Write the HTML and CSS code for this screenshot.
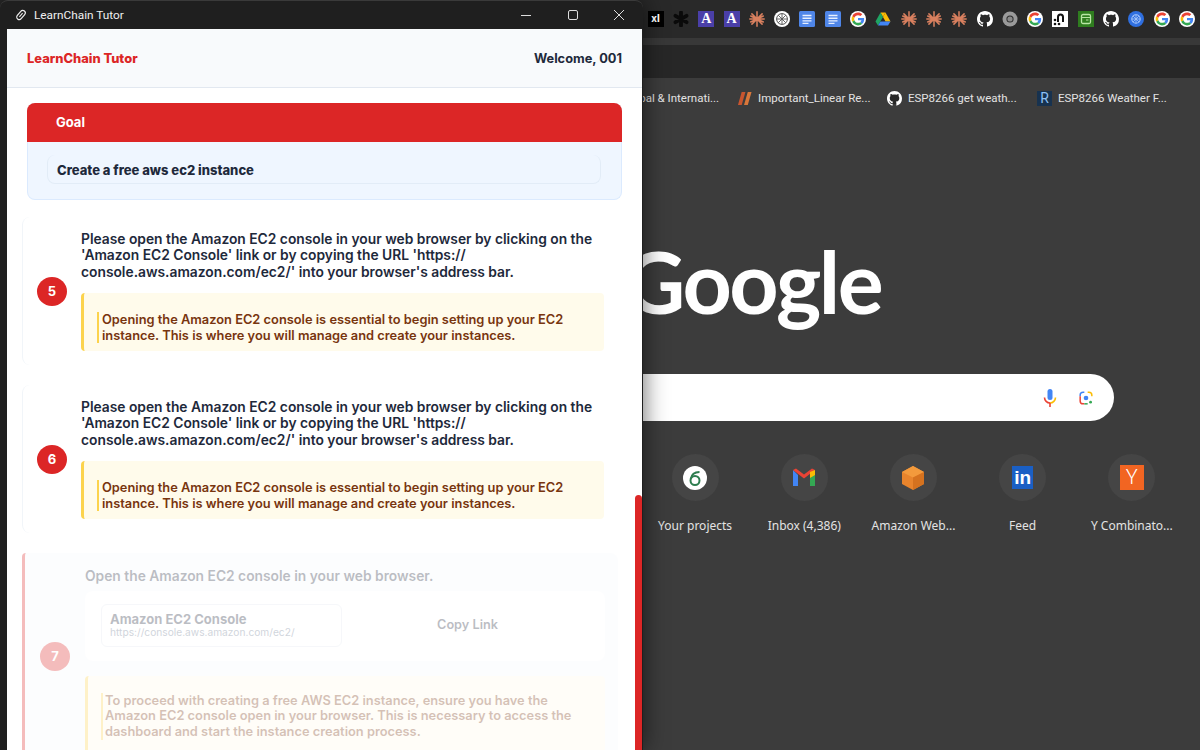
FILE: index.html
```html
<!DOCTYPE html>
<html lang="en">
<head>
  <meta charset="UTF-8" />
  <title>LearnChain Tutor</title>
  <link rel="stylesheet" href="styles.css">
</head>
<body>
<svg class="defs" width="0" height="0">
  <symbol id="i-google" viewBox="-6 -6 60 60">
    <circle cx="24" cy="24" r="30" fill="#fff"/>
    <path fill="#EA4335" d="M24 9.5c3.54 0 6.71 1.22 9.21 3.6l6.85-6.85C35.9 2.38 30.47 0 24 0 14.62 0 6.51 5.38 2.56 13.22l7.98 6.19C12.43 13.72 17.74 9.5 24 9.5z"/>
    <path fill="#4285F4" d="M46.98 24.55c0-1.57-.15-3.09-.38-4.55H24v9.02h12.94c-.58 2.96-2.26 5.48-4.78 7.18l7.73 6c4.51-4.18 7.09-10.36 7.09-17.65z"/>
    <path fill="#FBBC05" d="M10.53 28.59c-.48-1.45-.76-2.99-.76-4.59s.27-3.14.76-4.59l-7.98-6.19C.92 16.46 0 20.12 0 24c0 3.88.92 7.54 2.56 10.78l7.97-6.19z"/>
    <path fill="#34A853" d="M24 48c6.48 0 11.93-2.13 15.89-5.81l-7.73-6c-2.15 1.45-4.92 2.3-8.16 2.3-6.26 0-11.57-4.22-13.47-9.91l-7.98 6.19C6.51 42.62 14.62 48 24 48z"/>
  </symbol>
  <symbol id="i-github" viewBox="0 0 16 16">
    <circle cx="8" cy="8" r="6" fill="#292929"/>
    <path fill="#fff" d="M8 0C3.58 0 0 3.58 0 8c0 3.54 2.29 6.53 5.47 7.59.4.07.55-.17.55-.38 0-.19-.01-.82-.01-1.49-2.01.37-2.53-.49-2.69-.94-.09-.23-.48-.94-.82-1.13-.28-.15-.68-.52-.01-.53.63-.01 1.08.58 1.23.82.72 1.21 1.87.87 2.33.66.07-.52.28-.87.51-1.07-1.78-.2-3.64-.89-3.64-3.95 0-.87.31-1.59.82-2.15-.08-.2-.36-1.02.08-2.12 0 0 .67-.21 2.2.82.64-.18 1.32-.27 2-.27.68 0 1.36.09 2 .27 1.53-1.04 2.2-.82 2.2-.82.44 1.1.16 1.92.08 2.12.51.56.82 1.27.82 2.15 0 3.07-1.87 3.75-3.65 3.95.29.25.54.73.54 1.48 0 1.07-.01 1.93-.01 2.2 0 .21.15.46.55.38A8.013 8.013 0 0016 8c0-4.42-3.58-8-8-8z"/>
  </symbol>
  <symbol id="i-claude" viewBox="0 0 16 16">
    <g stroke="#d9805f" stroke-width="1.5" stroke-linecap="round">
      <path d="M8 .8v14.400M.8 8h14.400M2.900 2.900l10.200 10.200M13.100 2.900L2.900 13.100M1.700 5l12.600 6M14.300 5L1.700 11"/>
    </g>
  </symbol>
  <symbol id="i-docs" viewBox="0 0 16 16">
    <rect width="16" height="16" rx="1.5" fill="#4f86e8"/>
    <path d="M3.500 4.500h9M3.500 7.200h9M3.500 9.900h9M3.500 12.400h6" stroke="#e8f0fe" stroke-width="1.400"/>
  </symbol>
  <symbol id="i-burst" viewBox="0 0 16 16">
    <circle cx="8" cy="8" r="8" fill="#fff"/>
    <circle cx="8" cy="8" r="5.400" fill="none" stroke="#555" stroke-width="1"/>
    <path d="M8 2.600v10.800M2.600 8h10.800M4.200 4.200l7.600 7.600M11.800 4.200l-7.600 7.600" stroke="#555" stroke-width=".9"/>
  </symbol>
</svg>

<div class="browser">
  <div class="tab-strip">
    <div class="tab"><span class="fav fav-xai">xI</span></div>
    <div class="tab"><svg class="fav" viewBox="0 0 16 16"><path d="M8 1.500v13M2.500 4.800l11 6.400M13.500 4.800l-11 6.400" stroke="#0a0a0a" stroke-width="3.800" stroke-linecap="round"/></svg></div>
    <div class="tab"><span class="fav fav-a">A</span></div>
    <div class="tab"><span class="fav fav-a">A</span></div>
    <div class="tab"><svg class="fav"><use href="#i-claude"/></svg></div>
    <div class="tab"><svg class="fav"><use href="#i-burst"/></svg></div>
    <div class="tab"><svg class="fav"><use href="#i-docs"/></svg></div>
    <div class="tab"><svg class="fav"><use href="#i-docs"/></svg></div>
    <div class="tab"><svg class="fav"><use href="#i-google"/></svg></div>
    <div class="tab"><svg class="fav" viewBox="0 0 16 16"><path d="M5.500 1.500h5L8 6z" fill="#fbbc05"/><path d="M5.500 1.500L.5 10.500 3 14.500 8 6z" fill="#1fa463"/><path d="M10.500 1.500l5 9h-5L8 6z" fill="#fbbc05"/><path d="M3 14.500h10l2.500-4H5.500z" fill="#4285f4"/></svg></div>
    <div class="tab"><svg class="fav"><use href="#i-claude"/></svg></div>
    <div class="tab"><svg class="fav"><use href="#i-claude"/></svg></div>
    <div class="tab"><svg class="fav"><use href="#i-claude"/></svg></div>
    <div class="tab"><svg class="fav"><use href="#i-github"/></svg></div>
    <div class="tab"><svg class="fav" viewBox="0 0 16 16"><circle cx="8" cy="8" r="7.500" fill="#9a9a9a"/><circle cx="8" cy="8" r="3.600" fill="#2b2b2b"/><circle cx="8" cy="8" r="2.600" fill="#8a8a8a"/></svg></div>
    <div class="tab"><svg class="fav"><use href="#i-google"/></svg></div>
    <div class="tab"><svg class="fav" viewBox="0 0 16 16"><rect width="16" height="16" fill="#fff"/><path d="M6 11V6a2.500 2.500 0 015 0v5" fill="none" stroke="#111" stroke-width="2"/><circle cx="3" cy="9" r="1.300" fill="#111"/><circle cx="3" cy="13" r="1.300" fill="#111"/><circle cx="7" cy="13" r="1.300" fill="#111"/></svg></div>
    <div class="tab"><svg class="fav" viewBox="0 0 16 16"><rect width="16" height="16" fill="#2f7d1f"/><rect x="3.500" y="3.500" width="9" height="9" rx="1.500" fill="none" stroke="#b9e6a5" stroke-width="1.300"/><path d="M3.500 6.500h9M8 9h2.500" stroke="#b9e6a5" stroke-width="1.200"/></svg></div>
    <div class="tab"><svg class="fav"><use href="#i-github"/></svg></div>
    <div class="tab"><svg class="fav" viewBox="0 0 16 16"><circle cx="8" cy="8" r="8" fill="#2f6fe0"/><circle cx="8" cy="8" r="4.200" fill="none" stroke="#a9c8fa" stroke-width="1.100"/><path d="M8 3.800v8.400M3.800 8h8.400M5 5l6 6M11 5l-6 6" stroke="#a9c8fa" stroke-width=".8"/></svg></div>
    <div class="tab"><svg class="fav"><use href="#i-google"/></svg></div>
    <div class="tab"><svg class="fav"><use href="#i-google"/></svg></div>
  </div>
  <div class="strip-band"></div>
  <div class="toolbar"></div>
  <div class="bookmarks">
    <div class="bookmark"><span class="bm-spacer"></span><span>Global &amp; Internati...</span></div>
    <div class="bookmark">
      <svg class="bm-icon" viewBox="0 0 16 16"><path d="M5 1h4L5 15H1z" fill="#c8552f"/><path d="M11.500 1h4l-4 14h-4z" fill="#d9773a"/></svg>
      <span>Important_Linear Re...</span>
    </div>
    <div class="bookmark"><svg class="bm-icon"><use href="#i-github"/></svg><span>ESP8266 get weath...</span></div>
    <div class="bookmark"><span class="bm-icon bm-r">R</span><span>ESP8266 Weather F...</span></div>
  </div>
  <div class="ntp">
    <div class="logo">Google</div>
    <div class="search">
      <svg class="search-icon" viewBox="0 0 20 20">
        <rect x="7.500" y="1" width="5" height="11" rx="2.500" fill="#4285f4"/>
        <path d="M4.500 9.500a5.500 5.500 0 0 0 5.500 5.500" fill="none" stroke="#ea4335" stroke-width="1.600"/>
        <path d="M15.500 9.500A5.500 5.500 0 0 1 10 15" fill="none" stroke="#fbbc05" stroke-width="1.600"/>
        <path d="M10 15v4" stroke="#ea4335" stroke-width="1.600"/>
      </svg>
      <svg class="search-icon" viewBox="-2 -2 24 24">
        <circle cx="10" cy="10" r="2.800" fill="#4285f4"/>
        <path d="M3 8V6.500A3.500 3.500 0 0 1 6.500 3H8" fill="none" stroke="#4285f4" stroke-width="1.800"/>
        <path d="M8 17H6.500A3.500 3.500 0 0 1 3 13.500V8" fill="none" stroke="#ea4335" stroke-width="1.800"/>
        <path d="M12 3h1.500A3.500 3.500 0 0 1 17 6.500V8" fill="none" stroke="#fbbc05" stroke-width="1.800"/>
        <path d="M8 17h4" stroke="#34a853" stroke-width="1.800"/>
        <circle cx="15.500" cy="15" r="1.700" fill="#34a853"/>
      </svg>
    </div>
    <div class="shortcuts">
      <div class="shortcut">
        <div class="shortcut-icon">
          <svg class="sc-svg" viewBox="0 0 24 24"><circle cx="12" cy="12" r="12" fill="#fff"/><circle cx="12" cy="14.500" r="4.500" fill="none" stroke="#2e7d4f" stroke-width="2"/><path d="M7.800 13C8.500 8.500 11.500 6 16.500 6" fill="none" stroke="#2e7d4f" stroke-width="2"/></svg>
        </div>
        <span>Your projects</span>
      </div>
      <div class="shortcut">
        <div class="shortcut-icon">
          <svg class="sc-svg" viewBox="0 0 24 24"><path d="M1 4v16h5V9z" fill="#4285f4"/><path d="M18 9v11h5V4z" fill="#34a853"/><path d="M1 4l11 8.500L23 4l-3-1.500-8 6-8-6z" fill="#ea4335"/><path d="M18 6l5-2v5l-5 3z" fill="#fbbc05"/></svg>
        </div>
        <span>Inbox (4,386)</span>
      </div>
      <div class="shortcut">
        <div class="shortcut-icon">
          <svg class="sc-svg" viewBox="0 0 24 24"><path d="M12 0l11 6v12l-11 6L1 18V6z" fill="#e8842c"/><path d="M12 11.500L23 6 12 0 1 6z" fill="#f39a3c"/><path d="M12 11.500V24l11-6V6z" fill="#d5721f"/></svg>
        </div>
        <span>Amazon Web...</span>
      </div>
      <div class="shortcut">
        <div class="shortcut-icon"><span class="sc-in">in</span></div>
        <span>Feed</span>
      </div>
      <div class="shortcut">
        <div class="shortcut-icon"><span class="sc-y">Y</span></div>
        <span>Y Combinato...</span>
      </div>
    </div>
  </div>
</div>

<div class="app-window">
  <div class="titlebar">
    <svg class="title-icon" viewBox="0 0 12 12"><rect x="3.500" y="0.800" width="5" height="10.400" rx="2.500" transform="rotate(40 6 6)" fill="none" stroke="#eee" stroke-width="1.200"/><path d="M6 3.500v5" transform="rotate(40 6 6)" stroke="#eee" stroke-width="1"/></svg>
    <span class="title-text">LearnChain Tutor</span>
    <div class="win-controls">
      <svg class="win-btn" viewBox="0 0 46 12"><path d="M17 6.500h10" stroke="#ddd" stroke-width="1"/></svg>
      <svg class="win-btn" viewBox="0 0 46 12"><rect x="18.500" y="1.500" width="9" height="9" rx="1.500" fill="none" stroke="#ddd" stroke-width="1"/></svg>
      <svg class="win-btn" viewBox="0 0 46 12"><path d="M18 1l10 10M28 1L18 11" stroke="#ddd" stroke-width="1"/></svg>
    </div>
  </div>
  <div class="app">
    <header class="app-header">
      <div class="brand">LearnChain Tutor</div>
      <div class="welcome">Welcome, 001</div>
    </header>
    <main class="app-main">
      <section class="goal">
        <div class="goal-head">Goal</div>
        <div class="goal-body">
          <div class="goal-text">Create a free aws ec2 instance</div>
        </div>
      </section>

      <div class="step">
        <div class="step-num">5</div>
        <div class="step-content">
          <p class="step-text">Please open the Amazon EC2 console in your web browser by clicking on the 'Amazon EC2 Console' link or by copying the URL 'https://<wbr>console.aws.amazon.com/ec2/' into your browser's address bar.</p>
          <div class="why"><p>Opening the Amazon EC2 console is essential to begin setting up your EC2 instance. This is where you will manage and create your instances.</p></div>
        </div>
      </div>

      <div class="step">
        <div class="step-num">6</div>
        <div class="step-content">
          <p class="step-text">Please open the Amazon EC2 console in your web browser by clicking on the 'Amazon EC2 Console' link or by copying the URL 'https://<wbr>console.aws.amazon.com/ec2/' into your browser's address bar.</p>
          <div class="why"><p>Opening the Amazon EC2 console is essential to begin setting up your EC2 instance. This is where you will manage and create your instances.</p></div>
        </div>
      </div>

      <div class="step step-entering">
        <div class="step-num">7</div>
        <div class="step-content">
          <p class="step-text">Open the Amazon EC2 console in your web browser.</p>
          <div class="link-panel">
            <div class="link-box">
              <div class="link-name">Amazon EC2 Console</div>
              <div class="link-url">https://console.aws.amazon.com/ec2/</div>
            </div>
            <div class="copy-link">Copy Link</div>
          </div>
          <div class="why"><p>To proceed with creating a free AWS EC2 instance, ensure you have the Amazon EC2 console open in your browser. This is necessary to access the dashboard and start the instance creation process.</p></div>
        </div>
      </div>
    </main>
    <div class="scroll-thumb"></div>
  </div>
</div>
</body>
</html>
```
FILE: styles.css
```css
* {
  box-sizing: border-box;
}

html, body {
  margin: 0;
  height: 100%;
  overflow: hidden;
}

body {
  position: relative;
  background-color: #3c3c3c;
  font-family: Inter, 'Liberation Sans', sans-serif;
}

.defs {
  position: absolute;
}

/* chrome window behind */
.browser {
  position: absolute;
  top: 0;
  left: 0;
  width: 1200px;
  height: 750px;
  font-family: 'Noto Sans', 'Open Sans', sans-serif;
  color: #e3e3e3;
}

.tab-strip {
  display: flex;
  align-items: center;
  height: 38px;
  padding-left: 643px;
  background: #292929;
}

.tab {
  flex: 0 0 25.3px;
  display: flex;
  justify-content: center;
  align-items: center;
}

.fav {
  display: block;
  width: 16px;
  height: 16px;
}

.fav-xai {
  background: #000;
  color: #fff;
  font-family: Roboto, sans-serif;
  font-size: 11px;
  font-weight: 700;
  line-height: 16px;
  text-align: center;
}

.fav-a {
  background: #4a3fa8;
  color: #fff;
  font-family: 'Liberation Serif', serif;
  font-weight: 700;
  font-size: 14px;
  line-height: 16px;
  text-align: center;
}

.strip-band {
  height: 7px;
  background: #383838;
}

.toolbar {
  height: 33px;
  background: #272727;
}

.bookmarks {
  display: flex;
  height: 40px;
  padding-left: 587px;
  background: #3c3c3c;
  font-family: Roboto, sans-serif;
  font-size: 11.5px;
}

.bookmark {
  flex: 0 0 150px;
  display: flex;
  align-items: center;
  gap: 6px;
  white-space: nowrap;
}

.bm-spacer {
  width: 29px;
}

.bm-icon {
  display: block;
  flex: none;
  width: 15px;
  height: 15px;
}

.bm-r {
  background: #17324f;
  color: #8fc1f5;
  font-size: 14px;
  line-height: 15px;
  text-align: center;
}

.ntp {
  height: 632px;
}

.logo {
  height: 256px;
  padding-top: 103px;
  padding-left: 623px;
  color: #fff;
  font-family: Lato, sans-serif;
  font-size: 86px;
  font-weight: 700;
  line-height: 120px;
  letter-spacing: -2.5px;
}

.search {
  display: flex;
  justify-content: flex-end;
  align-items: center;
  gap: 16px;
  width: 614px;
  height: 47px;
  margin-left: 500px;
  padding-right: 18px;
  background: #fff;
  border-radius: 24px;
}

.search-icon {
  width: 20px;
  height: 20px;
}

.shortcuts {
  display: grid;
  grid-template-columns: repeat(5, 109.2px);
  margin: 33px 0 0 640.5px;
}

.shortcut {
  display: flex;
  flex-direction: column;
  align-items: center;
  font-size: 12px;
  white-space: nowrap;
}

.shortcut-icon {
  display: flex;
  justify-content: center;
  align-items: center;
  width: 47px;
  height: 47px;
  margin-bottom: 16px;
  background: #454545;
  border-radius: 50%;
}

.sc-svg {
  width: 24px;
  height: 24px;
}

.sc-in {
  width: 21px;
  height: 23px;
  background: #1a5fc4;
  color: #fff;
  font-family: 'Liberation Sans', sans-serif;
  font-weight: 700;
  font-size: 19px;
  line-height: 23px;
  text-align: center;
}

.sc-y {
  width: 24px;
  height: 25px;
  background: #f26522;
  color: #fff;
  font-family: Roboto, sans-serif;
  font-weight: 300;
  font-size: 20px;
  line-height: 25px;
  text-align: center;
}

/* tutor window on top */
.app-window {
  position: absolute;
  top: 0;
  left: 0;
  display: flex;
  flex-direction: column;
  width: 643px;
  height: 750px;
  padding: 0 1px 0 7px;
  background: #1f1f1f;
  border-top: 1px solid #3a3a3a;
  border-radius: 8px 8px 0 0;
  box-shadow: 0 0 24px rgba(0, 0, 0, 0.6);
}

.titlebar {
  display: flex;
  align-items: center;
  flex: none;
  height: 28px;
  font-family: Roboto, sans-serif;
  color: #f0f0f0;
  font-size: 11.8px;
}

.title-icon {
  width: 12px;
  height: 12px;
  margin: 0 7px 0 8px;
}

.win-controls {
  display: flex;
  margin-left: auto;
}

.win-btn {
  width: 46px;
  height: 12px;
  margin-top: -1px;
}

.app {
  position: relative;
  flex: 1;
  overflow: hidden;
  background: #fff;
}

.app-header {
  display: flex;
  justify-content: space-between;
  align-items: center;
  height: 59px;
  padding: 0 20px;
  background: #f8fafc;
  border-bottom: 1px solid #e2e8f0;
}

.brand {
  color: #dc2626;
  font-size: 12.9px;
  font-weight: 800;
}

.welcome {
  color: #1e293b;
  font-size: 12.8px;
  font-weight: 700;
}

.app-main {
  display: flex;
  flex-direction: column;
  gap: 20px;
  padding: 15px 20px 0 15px;
}

.goal {
  margin: 0 0 -3px 5px;
  border: 1px solid #dbeafe;
  border-top: none;
  border-radius: 8px;
  background: #eff6ff;
}

.goal-head {
  height: 39px;
  margin: 0 -1px;
  padding-left: 29px;
  background: #dc2626;
  border-radius: 8px 8px 0 0;
  color: #fff;
  font-size: 13px;
  font-weight: 700;
  line-height: 39px;
}

.goal-body {
  padding: 13px 20px 15px 19px;
}

.goal-text {
  height: 29px;
  padding: 0 9px;
  border: 1px solid #e2ecf7;
  border-top: none;
  border-radius: 8px;
  color: #1e293b;
  font-size: 13px;
  font-weight: 800;
  line-height: 31px;
}

.step {
  display: flex;
  align-items: center;
  gap: 14px;
  height: 148px;
  padding: 0 18px 0 14px;
  border-left: 1px solid #f1f5f9;
  border-radius: 8px;
}

.step-num {
  flex: none;
  width: 30px;
  height: 29px;
  background: #dc2626;
  border-radius: 50%;
  color: #fff;
  font-size: 13px;
  font-weight: 700;
  line-height: 29px;
  text-align: center;
}

.step-content {
  flex: 1;
}

.step-text {
  margin: 0 0 13px;
  color: #1e293b;
  font-size: 13.8px;
  font-weight: 600;
  line-height: 16.5px;
}

.why {
  padding: 19px 13px 8px;
  background: #fffbeb;
  border-left: 3px solid #fcd34d;
  border-radius: 4px;
}

.why p {
  margin: 0;
  padding-left: 3px;
  border-left: 2px solid #fcd34d;
  color: #78350f;
  font-size: 12.83px;
  font-weight: 600;
  line-height: 15.7px;
}

.step-entering {
  align-items: flex-start;
  height: auto;
  min-height: 240px;
  margin-right: 4px;
  padding: 15px 13px 0 15px;
  gap: 15px;
  background: #f8fafc;
  border-left: 3px solid #dc2626;
  border-radius: 4px 8px 8px 4px;
  opacity: 0.3;
}

.step-entering .step-num {
  margin-top: 74px;
}

.step-entering .step-text {
  margin-bottom: 6px;
}

.link-panel {
  display: flex;
  align-items: center;
  height: 70px;
  margin-bottom: 15px;
  padding: 0 16px;
  background: #fff;
  border-radius: 8px;
}

.link-box {
  width: 241px;
  height: 43px;
  padding: 7px 8px 5px;
  border: 1px solid #e2e8f0;
  border-radius: 6px;
}

.link-name {
  color: #1e293b;
  font-size: 13px;
  font-weight: 700;
  line-height: 15px;
}

.link-url {
  color: #64748b;
  font-size: 10.2px;
  line-height: 11px;
}

.copy-link {
  flex: 1;
  margin-top: -2px;
  padding-left: 4px;
  color: #1e293b;
  font-size: 12.7px;
  font-weight: 600;
  text-align: center;
}

.step-entering .why {
  padding: 17px 13px 20px 13px;
}

.step-entering .why p {
  padding-left: 2px;
}

.scroll-thumb {
  position: absolute;
  top: 466px;
  right: 0;
  bottom: 0;
  width: 7px;
  background: #dc2626;
  border-radius: 4px 4px 0 0;
}
```
